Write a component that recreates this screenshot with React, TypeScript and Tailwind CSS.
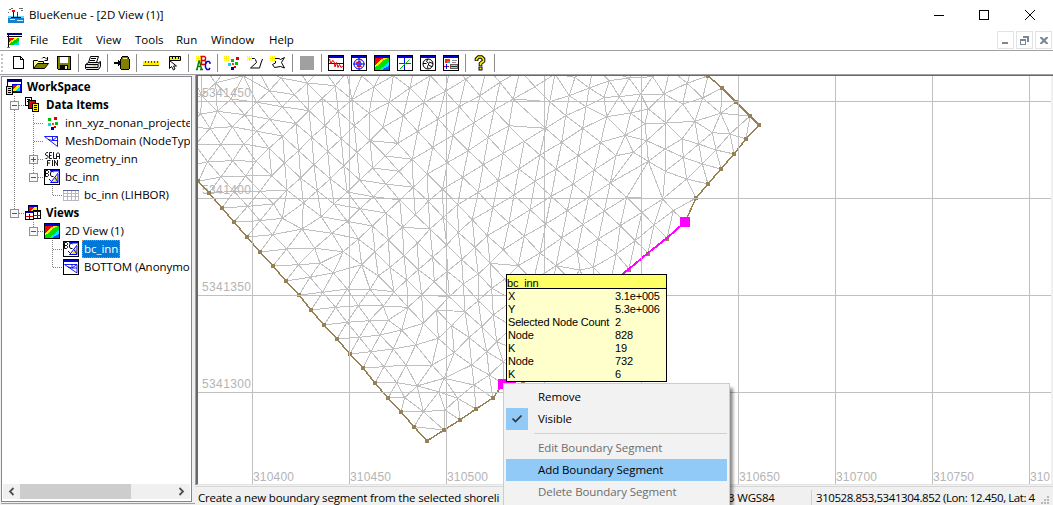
import React from "react";

type P = [number, number];

/* ---------- mesh geometry ---------- */

const patch = (ox: number, oy: number, flat: number[]): P[] => {
  const out: P[] = [];
  for (let i = 0; i < flat.length; i += 2) out.push([ox + flat[i] / 3, oy + flat[i + 1] / 3]);
  return out;
};

const westShore = [
  ...patch(195, 74, [-70, 235, -30, 280, 10, 322, 42, 357, 81, 402, 117, 444, 156, 489, 195, 534, 234, 576]),
  ...patch(300, 260, [-42, 64, -3, 105, 33, 150, 72, 195, 111, 237, 150, 282, 189, 324, 225, 369, 264, 414, 303, 456, 342, 500, 381, 543]),
];
westShore[9] = [286, 281];
const southShore = patch(300, 260, [432, 510, 480, 480, 528, 447, 579, 414, 609, 372]);
const selected: P[] = [[503, 384], [523, 380], [540, 357], [555, 331], [573, 316], [592, 300], [610, 284], [629, 269], [648, 253], [667, 238], [685, 222]];
const eastShore = patch(480, 74, [615, 444, 648, 372, 684, 330, 723, 285, 762, 240, 798, 195, 837, 153, 810, 126, 768, 84, 726, 42, 684, 5, 640, -40]);

const outline: P[] = [...westShore, ...southShore, ...selected.slice(1, -1), ...eastShore, [680, 30], [170, 30]];

const interior: P[] = [
  ...patch(195, 74, [
    -20, -20, 62, 27, 20, -30, 100, -25, 145, 5, 180, -30, 258, 12, 300, -30, 337, 27, 380, -20, 223, 50, 298, 62, 20, 65, 108, 75, 185, 85, 262, 98, 342, 110,
    -50, 20, -50, 80, -60, 150, 17, 120, 67, 112, 149, 122, 225, 136, 303, 149, 382, 73, 421, 35, 471, 77, 430, 112, -25, 160, 45, 163, 112, 158,
    185, 172, 263, 186, 350, 190, 390, 155, 439, 194, 478, 155, 522, 117, 455, -5, 500, 5, 537, 38, 575, -35, 564, 160, 0, 213, 78, 211, 146, 210,
    222, 223, 311, 230, 398, 232, 486, 235, 525, 200, 608, 208, 583, 85, 595, 5, 625, 125, 645, 42, 660, -35, 38, 263, 113, 260, 183, 262, 269, 267,
    357, 272, 446, 275, 533, 282, 571, 246, 652, 256, 668, 172, 688, 85, 706, 5, 78, 309, 152, 306, 230, 305, 317, 312, 406, 314,
    494, 318, 612, 292, 697, 300, 713, 220, 730, 135, 751, 52, 768, -30, 117, 352, 195, 352, 276, 348, 367, 350, 457, 354, 573, 330,
    655, 340, 757, 266, 774, 184, 793, 98, 812, 15, 158, 397, 236, 390, 325, 387, 417, 390, 535, 368, 614, 378, 700, 382,
    743, 345, 820, 230, 836, 147, 855, 65, 195, 440, 262, 433, 379, 428, 495, 404, 573, 417, 661, 423, 788, 392, 803, 310,
    850, 355, 233, 482, 321, 465, 411, 478, 457, 442, 532, 456, 622, 460, 745, 430, 705, 465, 832, 437, 275, 525, 359, 523,
    445, 533, 490, 495, 580, 498, 668, 507, 790, 475, 755, 513, 840, 520, 310, 572, 375, 568, 500, 572, 540, 533, 627, 545,
    713, 550, 800, 557, 585, 580, 670, 587, 757, 592, 850, 600,
  ]),
  ...patch(480, 74, [
    20, -20, 60, 25, 120, -10, 42, 108, 100, 75, 165, 38, 225, 0, 87, 155, 25, 190, 10, 272, 70, 238, 133, 202, 197, 163, 257, 125, 318, 98, 209, 83,
    268, 65, 328, 42, 388, 20, 285, 10, 340, -25, 372, 70, 418, 68, 447, 12, 480, -30, 380, 128, 452, 117, 482, 60, 505, 105, 518, 8, 570, -15, 552, 60,
    495, 150, 558, 147, 608, 90, 622, 28, 668, 72, 645, 142, 722, 118, 697, 176, 750, 180, 708, 228, 656, 210, 606, 195,
    555, 225, 500, 200, 436, 184, 362, 205, 308, 163, 245, 205, 180, 243, 117, 285, 55, 320, 408, 245, 460, 235, 505, 262,
    343, 288, 295, 245, 229, 285, 165, 322, 102, 363, 38, 402, 280, 330, 391, 327, 440, 370, 556, 292, 610, 250, 667, 270,
    620, 315, 548, 375, 580, 410, 326, 370, 214, 367, 150, 407, 87, 447, 22, 485, 373, 411, 486, 415, 522, 453, 466, 500,
    409, 540, 421, 455, 308, 452, 355, 495, 262, 410, 197, 450, 133, 487, 70, 527, 245, 492, 180, 537, 292, 533, 115, 575,
    30, 568, 228, 575, 340, 580, 390, 600, 160, 620, 275, 620, 75, 615,
  ]),
  ...patch(300, 260, [
    58, 10, 30, 52, 100, 38, 183, 13, 235, 48, 282, 95, 68, 97, 142, 87, 210, 88, 107, 142, 175, 137, 250, 138, 324, 142,
    276, 5, 320, 60, 141, 187, 208, 182, 265, 180, 370, 190, 365, 105, 178, 232, 240, 225, 305, 210, 415, 235, 213, 275,
    280, 267, 347, 255, 252, 320, 318, 315, 396, 315, 463, 278, 410, 150, 455, 197, 290, 368, 351, 378, 432, 355, 515, 315,
    507, 232, 314, 413, 416, 395, 473, 415, 370, 455, 435, 450, 403, 65, 361, 20, 448, 110, 490, 72, 445, 28, 532, 35, 535, 122,
    580, 165, 495, 155, 545, 200, 590, 245, 575, 85, 615, 45, 560, 275, 610, 305, 522, 375, 568, 345, 640, 120, 640, 200, 650, 270,
    660, 330, 690, 80, 700, 160, 710, 240, 740, 30, 750, 120, 760, 200, 790, 70, 800, 150, 840, 30, 850, 110, 900, 60,
  ]),
];

const inside = (x: number, y: number, poly: P[]) => {
  let hit = false;
  for (let i = 0, j = poly.length - 1; i < poly.length; j = i++) {
    const [xi, yi] = poly[i];
    const [xj, yj] = poly[j];
    if (yi > y !== yj > y && x < ((xj - xi) * (y - yi)) / (yj - yi) + xi) hit = !hit;
  }
  return hit;
};

interface Tri { v: [number, number, number]; cx: number; cy: number; r: number }

const makeTri = (pts: P[], a: number, b: number, c: number): Tri => {
  const [ax, ay] = pts[a];
  const [bx, by] = pts[b];
  const [qx, qy] = pts[c];
  const d = 2 * (ax * (by - qy) + bx * (qy - ay) + qx * (ay - by)) || 1e-9;
  const a2 = ax * ax + ay * ay, b2 = bx * bx + by * by, c2 = qx * qx + qy * qy;
  const cx = (a2 * (by - qy) + b2 * (qy - ay) + c2 * (ay - by)) / d;
  const cy = (a2 * (qx - bx) + b2 * (ax - qx) + c2 * (bx - ax)) / d;
  return { v: [a, b, c], cx, cy, r: (ax - cx) ** 2 + (ay - cy) ** 2 };
};

const buildMesh = (): string => {
  const kept: P[] = [...outline];
  for (const p of interior) {
    if (inside(p[0], p[1], outline) && kept.every((q) => Math.hypot(p[0] - q[0], p[1] - q[1]) > 11.5)) kept.push(p);
  }
  const n = kept.length;
  const pts: P[] = [...kept, [-5000, -4000], [6000, -4100], [500, 7000]];
  let tris: Tri[] = [makeTri(pts, n, n + 1, n + 2)];
  for (let i = 0; i < n; i++) {
    const [x, y] = pts[i];
    const edges = new Map<string, [number, number]>();
    const rest: Tri[] = [];
    for (const t of tris) {
      if ((x - t.cx) ** 2 + (y - t.cy) ** 2 < t.r) {
        for (let k = 0; k < 3; k++) {
          const a = t.v[k], b = t.v[(k + 1) % 3];
          const key = a < b ? `${a}-${b}` : `${b}-${a}`;
          if (edges.has(key)) edges.delete(key);
          else edges.set(key, [a, b]);
        }
      } else rest.push(t);
    }
    edges.forEach(([a, b]) => rest.push(makeTri(pts, a, b, i)));
    tris = rest;
  }
  const seen = new Set<string>();
  let d = "";
  for (const t of tris) {
    if (t.v.some((k) => k >= n)) continue;
    const gx = (pts[t.v[0]][0] + pts[t.v[1]][0] + pts[t.v[2]][0]) / 3;
    const gy = (pts[t.v[0]][1] + pts[t.v[1]][1] + pts[t.v[2]][1]) / 3;
    if (!inside(gx, gy, outline)) continue;
    for (let k = 0; k < 3; k++) {
      const a = t.v[k], b = t.v[(k + 1) % 3];
      const key = a < b ? `${a}-${b}` : `${b}-${a}`;
      if (seen.has(key)) continue;
      seen.add(key);
      d += `M${pts[a][0].toFixed(1)} ${pts[a][1].toFixed(1)}L${pts[b][0].toFixed(1)} ${pts[b][1].toFixed(1)}`;
    }
  }
  return d;
};

const meshPath = buildMesh();
const line = (pts: P[]) => pts.map((p) => p.join(",")).join(" ");
const gridX = [252, 349, 446, 544, 641, 738, 835, 932, 1029];
const gridY = [101, 198, 295, 392];
const labelsX: [number, string][] = [[253, "310400"], [350, "310450"], [447, "310500"], [739, "310650"], [836, "310700"], [933, "310750"]];

function MeshView() {
  return (
    <svg viewBox="198 76 853 408" width="853" height="408" className="block shrink-0 bg-white" shapeRendering="crispEdges">
      <path d={meshPath} stroke="#c0c0c0" fill="none" />
      <g fontFamily="Liberation Sans, sans-serif" fontSize="12" fill="#b4b4b4">
        {labelsX.map(([x, t]) => (
          <text key={x} x={x} y="480.5" textLength="41">{t}</text>
        ))}
        <text x="1030" y="480.5" textLength="20">310</text>
        {gridY.map((y, i) => (
          <text key={y} x="202" y={y - 4} textLength="49">{5341450 - i * 50}</text>
        ))}
      </g>
      {[[...westShore, ...southShore], eastShore].map((s, i) => (
        <g key={i}>
          <polyline points={line(s)} fill="none" stroke="#968254" strokeWidth="1.5" />
          {s.map(([x, y], k) => (
            <rect key={k} x={Math.round(x) - 2} y={Math.round(y) - 2} width="4" height="4" fill="#968254" />
          ))}
        </g>
      ))}
      {selected.map(([x, y], k) => (
        <rect key={k} x={x - 2} y={y - 1} width="4" height="4" fill="#968254" />
      ))}
      <polyline points={line(selected)} fill="none" stroke="#ff00ff" strokeWidth="2" />
      <g fill="#c0c0c0">
        {gridX.map((x) => <rect key={x} x={x} y="76" width="1" height="408" />)}
        {gridY.map((y) => <rect key={y} x="198" y={y} width="853" height="1" />)}
      </g>
      <rect x="680" y="217" width="10" height="10" fill="#ff00ff" />
      <rect x="498" y="379" width="10" height="10" fill="#ff00ff" />
    </svg>
  );
}

/* ---------- icons ---------- */

function Ico({ children, smooth = false }: { children: React.ReactNode; smooth?: boolean }) {
  return (
    <svg width="16" height="16" viewBox="0 0 16 16" className="block shrink-0" shapeRendering={smooth ? "auto" : "crispEdges"} fill="none">
      {children}
    </svg>
  );
}

const Star = ({ x = 0, y = 0 }: { x?: number; y?: number }) => (
  <path d={`M${x + 2.5} ${y}v2M${x + 2.5} ${y + 3}v2M${x} ${y + 2.5}h5M${x + 0.5} ${y}v1M${x + 4.5} ${y}v1M${x + 0.5} ${y + 4}v1M${x + 4.5} ${y + 4}v1`} stroke="#ffee00" />
);
const Frame = ({ children }: { children?: React.ReactNode }) => (
  <>
    <rect x="0.5" y="0.5" width="15" height="15" fill="#fff" stroke="#000" shapeRendering="crispEdges" />
    <path d="M1 1h14v2H1z" fill="#0000d0" shapeRendering="crispEdges" />
    {children}
  </>
);
const Rainbow = () => (
  <>
    <path d="M1 3h14v12H1z" fill="#00e000" />
    <path d="M1 3h13L8 6 5 10 1 12z" fill="#ffee00" />
    <path d="M1 3h9L6 5 4 8 1 10z" fill="#ff0000" />
    <path d="M15 6v9H5l3-3 3-1 2-3z" fill="#00e5ff" />
    <path d="M15 11v4H8l3-2z" fill="#0050ff" />
  </>
);

const NewIcon = () => <Ico><path d="M3.500 1.500h7l3 3v9h-10zM10.500 1.500v3h3" fill="#fff" stroke="#000" /></Ico>;
const OpenIcon = () => (
  <Ico smooth>
    <path d="M0.5 13.500v-8h4l1 1h5v3" fill="#ffff80" stroke="#000" />
    <path d="M0.5 13.500l4-5h11l-4 5z" fill="#808000" stroke="#000" />
    <path d="M9 3.500l1-1h2l2 2M14.500 2v3.500h-3" stroke="#000" />
  </Ico>
);
const SaveIcon = () => (
  <Ico>
    <path d="M1.500 1.500h13v13h-12l-1-1z" fill="#808000" stroke="#000" />
    <path d="M4 2h8v6H4z" fill="#fff" />
    <path d="M4 10h8v4H4z" fill="#000" />
    <path d="M9 11h2v3H9z" fill="#e8e8e8" />
  </Ico>
);
const PrintIcon = () => (
  <Ico smooth>
    <path d="M5.500 1.500h8l-2 6h-8z" fill="#fff" stroke="#000" />
    <path d="M6 3.500h5M5 5.500h5" stroke="#000" />
    <path d="M3.500 7.500h10l2 -1v5l-2 3h-12l-1-1v-4z" fill="#e0e0e0" stroke="#000" />
    <path d="M1 9.500h12l2-2M1 12.500h12v-3" stroke="#000" />
    <path d="M8 10.500h3v1H8z" fill="#d0c000" />
  </Ico>
);
const ImportIcon = () => (
  <Ico>
    <path d="M6.500 4.500l2-3h5l2 3v9l-1 1h-7l-1-1z" fill="#808000" stroke="#000" />
    <path d="M9 3h4v1H9z" fill="#ffff80" />
    <path d="M0 7h4V5l4 3-4 3V9H0z" fill="#000" />
  </Ico>
);
const RulerIcon = () => (
  <Ico>
    <path d="M0 6h16v4H0z" fill="#ffee00" />
    <path d="M0 10.500h16" stroke="#605000" />
    <path d="M2.500 6v2M5.500 6v2M8.500 6v2M11.500 6v2M14.500 6v2" stroke="#605000" />
  </Ico>
);
const ProbeIcon = () => (
  <Ico smooth>
    <path d="M3.500 1.500h11v4h-11z" fill="#ffee00" stroke="#000" />
    <path d="M6.500 2v2M9.500 2v2M12.500 2v2" stroke="#000" />
    <path d="M3.500 5.500v8l2-2 2 3.500 1.500-1-1.500-3h3z" fill="#fff" stroke="#000" />
  </Ico>
);
const AbcIcon = () => (
  <Ico smooth>
    <Star x={1} y={1} />
    <path d="M1 14.500h2M2 14l2-8h.5l2 8M5 14.500h3M2.500 11.500h4" stroke="#008000" strokeWidth="1.400" />
    <path d="M6.500 1.500v8M5.500 1.500h4l1 1v2l-1 1H7M9.500 5.500l1.500 1v2l-1 1H5.500" stroke="#e00000" strokeWidth="1.400" />
    <path d="M15 9V7.500l-1-1h-2l-1.500 2v4l1.500 2h2l1-1.500" stroke="#0000e0" strokeWidth="1.400" />
  </Ico>
);
const Dots = ({ star = true }: { star?: boolean }) => (
  <>
    {star && <Star x={0} y={1} />}
    <path d={star ? "M7 4h3v3H7z" : "M4 3h3v3H4z"} fill="#00c000" />
    <path d={star ? "M12 2h3v3h-3z" : "M10 2h3v3h-3z"} fill="#e00000" />
    <path d="M11 7h3v3h-3z" fill="#00c000" />
    <path d="M10 11h2v2h-2z" fill="#e00000" />
    <path d="M8 8h2v2H8z" fill="#e05000" />
    <path d="M4 8h3v3H4z" fill="#00d8e8" />
    <path d="M7 12h3v3H7z" fill="#0000c0" />
  </>
);
const LineIcon = () => <Ico smooth><Star y={1} /><path d="M5 3.500h2.500l1 1 1 3-6 5.500h9l1.500-5 1.500-4" stroke="#000" /></Ico>;
const PolyIcon = () => <Ico smooth><Star y={1} /><path d="M5 3.500h4l1.500 1 4-2-3 5 3 5.500-4-1.500-6 1-2-3 3-1.500V6" stroke="#000" /></Ico>;
const PlotIcon = () => <Ico smooth><Frame><path d="M1 8.500h14" stroke="#00f" /><path d="M1.500 4l1.500 5 1.500-3.500 1.500 1L7 12l1.500-4.500 1.500 5 1.500-3 1.500 3 2-1.500" stroke="#e00000" /></Frame></Ico>;
const PolarIcon = () => (
  <Ico smooth><Frame><circle cx="8" cy="9" r="5" stroke="#00f" /><circle cx="8" cy="9" r="2.200" stroke="#00f" /><path d="M8 3v12M2 9h12" stroke="#00f" /><path d="M4.500 7l3 .5 3-2M5.500 12l3-1 2.500 1" stroke="#e00000" /></Frame></Ico>
);
const View2DIcon = () => <Ico><Frame><Rainbow /></Frame></Ico>;
const View3DIcon = () => <Ico smooth><Frame><path d="M7.500 3v12" stroke="#00f" /><path d="M2 8.500h12" stroke="#e00000" /><path d="M3 14L12.500 4.500" stroke="#00c000" /></Frame></Ico>;
const GlobeIcon = () => <Ico smooth><Frame><circle cx="8" cy="9" r="5" stroke="#000" /><path d="M8 4L6.500 6.500l2.500 2-1.500 3 .5 2M3 8.500h3.500M9 7l4 1.500M9 10.500l3 1" stroke="#000" /></Frame></Ico>;
const ReportIcon = () => (
  <Ico><Frame>
    <path d="M2 4h5v4H2z" fill="#ff3000" /><path d="M4 6h3v2H4z" fill="#00c0c0" /><path d="M9 5.500h5M9 7.500h4" stroke="#909090" />
    <path d="M1 11.500h5" stroke="#e00000" /><path d="M3.500 9v5" stroke="#00f" /><path d="M7.500 9.500h7v4h-7z" fill="#c0c0c0" stroke="#606060" /><path d="M8 11.500h6" stroke="#303030" />
  </Frame></Ico>
);
const HelpIcon = () => (
  <Ico smooth>
    <path d="M4.500 6V4l2-2h3l2 2v2L8.500 8.500V11" stroke="#000" strokeWidth="3.600" />
    <path d="M4.500 5.500V4l2-2h3l2 2v2L8.500 8.500v2" stroke="#ffee00" strokeWidth="1.700" />
    <path d="M6.500 11.500h4v4h-4z" fill="#000" /><path d="M7.500 12.500h2v2h-2z" fill="#ffee00" />
  </Ico>
);

const Notes = ({ x, y }: { x: number; y: number }) => (
  <>
    <rect x={x + 0.5} y={y + 0.5} width="6" height="8" fill="#ffee00" stroke="#000" />
    <path d={`M${x + 2} ${y + 2.5}h3M${x + 2} ${y + 4.5}h3M${x + 2} ${y + 6.5}h3`} stroke="#000" />
  </>
);
const WorkspaceIcon = () => (
  <Ico>
    <path d="M1.500.5h14v13h-14z" fill="#fff" stroke="#000" /><path d="M2 2h13" stroke="#000080" strokeWidth="2" />
    <path d="M6.500 5.500h8v7h-8z" fill="#ffee00" stroke="#00f" /><path d="M7 6h5l-5 4z" fill="#f00" /><path d="M14 8v4h-5z" fill="#00d8e8" />
    <Notes x={0} y={7} />
  </Ico>
);
const DataIcon = () => (
  <Ico>
    <path d="M.5.5h6v8h-6z" fill="#fff" stroke="#000" /><path d="M2 2.500h3M2 4.500h2" stroke="#000" />
    <path d="M3.500 3.500h7v8h-7z" fill="#e00000" stroke="#000" />
    <Notes x={7} y={6} />
  </Ico>
);
const MeshIcon = () => <Ico smooth><path d="M.5 3.500h13v10zM8.500 3.500V7.500M4 6.500l4.500 1h5M8.500 7.500l5-4" stroke="#0000ff" strokeWidth="0.900" /></Ico>;
const SelafinIcon = () => (
  <Ico smooth>
    <path d="M4 1.500H2.500L1.500 3v1L4 5v1.500l-1 1H1.500M8 1.500H5.500v6H8M5.500 4.500h2M9.500 1v6.500H12M12.500 8V3L14 1.500 15.500 3v5M12.500 5.500h3" stroke="#000" strokeWidth="0.900" />
    <path d="M6.500 9.500h-3V15M3.500 12h2.500M8.500 9v6M10.500 15V9M10.500 9.500l3 5M13.500 15V9" stroke="#000" strokeWidth="0.900" />
  </Ico>
);
const BcIcon = () => (
  <Ico smooth>
    <rect x="0.500" y="0.500" width="15" height="15" fill="#fff" stroke="#000" />
    <path d="M6 1h9v1.500H6z" fill="#0000d0" />
    <path d="M14 6v8H7.500z" fill="#ffe000" />
    <path d="M14.500 3.500L8 12l-1.500 1.500H14V5M5 10l3 3M11 8.500l3 5" stroke="#0000ff" />
    <path d="M1.500 1.500v6h2l1-1V5.500l-1-1h-2M3.500 4.500l1-1v-1l-1-1h-2M9.500 3l-1-.5h-1L6.500 4v2l1 1.500h2" stroke="#000" />
  </Ico>
);
const TableIcon = () => (
  <Ico><path d="M.5 3.500h15v10H.5zM4.500 3v10M8.500 3v10M12.500 3v10M0 6.500h16M0 9.500h16" stroke="#b8b8c0" /><path d="M0 3h16v1H0z" fill="#6060a0" /></Ico>
);
const ViewsIcon = () => (
  <Ico>
    <path d="M3.500.5h9v9h-9z" fill="#ffee00" stroke="#000" /><path d="M4 2h6l-6 5z" fill="#f00" /><path d="M12 4v5H8z" fill="#00d8e8" /><path d="M4 1.500h8" stroke="#00c" />
    <path d="M.5 6.500h8v8h-8z" fill="#fff" stroke="#000" /><path d="M1 7.500h7" stroke="#00c" /><path d="M1 11.500h7" stroke="#e00000" /><path d="M4.500 9v5" stroke="#00c" />
    <path d="M8.500 5.500h7v8h-7z" fill="#fff" stroke="#000" /><path d="M9 6.500h6M12.500 7v6" stroke="#00c" /><path d="M9 10.500h6" stroke="#e00000" />
  </Ico>
);
const BottomIcon = () => <Ico smooth><Frame><path d="M1.500 5.500h12.500v8.500zM9 5.500V9M5 8l4 1h5M9 9l5-3.500" stroke="#0000ff" strokeWidth="0.900" /></Frame></Ico>;
const AppIcon = () => (
  <Ico>
    <path d="M0 9h16v7H0z" fill="#1b7fd0" /><path d="M0 9h16v2H0z" fill="#60d8f8" />
    <path d="M2 12.500h5M9 13.500h6" stroke="#c8f0ff" /><path d="M1 2.500h2M3 1.500h2M11 1.500h4M13 3.500h2M0 5.500h1" stroke="#666" />
    <path d="M5.500 4v6" stroke="#101060" /><path d="M9.500 5v5" stroke="#303080" /><path d="M4 3h3v2H4z" fill="#e01010" /><path d="M3 10.500h10" stroke="#000060" />
  </Ico>
);
const ChildIcon = () => (
  <Ico>
    <path d="M1 1h15v2H1z" fill="#000080" /><path d="M2.500 3v12M1 4.500h15" stroke="#000" /><path d="M1 15.500h3" stroke="#777" />
    <path d="M3 6h10v7H3z" fill="#00d000" /><path d="M3 6h9l-9 6z" fill="#ffee00" /><path d="M3 6h6l-6 4z" fill="#f00" /><path d="M13 9v4H7z" fill="#00d8ff" />
  </Ico>
);

/* ---------- chrome ---------- */

const tools: (React.ReactNode | "|")[] = [
  <NewIcon />, <OpenIcon />, <SaveIcon />, "|", <PrintIcon />, "|", <ImportIcon />, "|", <RulerIcon />, <ProbeIcon />, "|", <AbcIcon />, "|",
  <Ico><Dots /></Ico>, <LineIcon />, <PolyIcon />, "|", <Ico><path d="M1 1h14v14H1z" fill="#a0a0a0" /></Ico>, "|",
  <PlotIcon />, <PolarIcon />, <View2DIcon />, <View3DIcon />, <GlobeIcon />, <ReportIcon />, "|", <HelpIcon />, "|",
];

const menus: [string, string][] = [
  ["File", "w-[32px]"], ["Edit", "w-[34px]"], ["View", "w-[39px]"], ["Tools", "w-[41px]"], ["Run", "w-[35px]"], ["Window", "w-[58px]"], ["Help", "w-[40px]"],
];

type Guide = "v" | "t" | "l" | "+" | "-" | "-l" | " ";

function GuideCell({ kind }: { kind: Guide }) {
  const box = kind === "+" || kind === "-" || kind === "-l";
  return (
    <svg width="19" height="18" viewBox="0 0 19 18" className="block shrink-0" shapeRendering="crispEdges" fill="none">
      {kind !== " " && <path d={kind === "l" || kind === "-l" ? "M9.500 0V9" : "M9.500 0V18"} stroke="#808080" strokeDasharray="1 1" />}
      {kind !== "v" && kind !== " " && <path d="M10 9.500H19" stroke="#808080" strokeDasharray="1 1" />}
      {box && <rect x="5.500" y="5.500" width="8" height="8" fill="#f8f8f8" stroke="#919191" />}
      {box && <path d="M7 9.500h5" stroke="#3b5998" />}
      {kind === "+" && <path d="M9.500 7v5" stroke="#3b5998" />}
    </svg>
  );
}

const rows: { g: Guide[]; icon: React.ReactNode; label: string; bold?: boolean; sel?: boolean }[] = [
  { g: [], icon: <WorkspaceIcon />, label: "WorkSpace", bold: true },
  { g: ["-"], icon: <DataIcon />, label: "Data Items", bold: true },
  { g: ["v", "t"], icon: <Ico><Dots star={false} /></Ico>, label: "inn_xyz_nonan_projecte" },
  { g: ["v", "t"], icon: <MeshIcon />, label: "MeshDomain (NodeTyp" },
  { g: ["v", "+"], icon: <SelafinIcon />, label: "geometry_inn" },
  { g: ["v", "-l"], icon: <BcIcon />, label: "bc_inn" },
  { g: ["v", " ", "l"], icon: <TableIcon />, label: "bc_inn (LIHBOR)" },
  { g: ["-l"], icon: <ViewsIcon />, label: "Views", bold: true },
  { g: [" ", "-l"], icon: <View2DIcon />, label: "2D View (1)" },
  { g: [" ", " ", "t"], icon: <BcIcon />, label: "bc_inn", sel: true },
  { g: [" ", " ", "l"], icon: <BottomIcon />, label: "BOTTOM (Anonymo" },
];

function Tree() {
  return (
    <div className="mr-px flex flex-1 flex-col overflow-hidden pt-px">
      {rows.map((r, i) => (
        <div key={i} className="flex h-[18px] shrink-0 items-center pl-[3px]">
          {r.g.map((k, j) => <GuideCell key={j} kind={k} />)}
          <span className="ml-px mr-[3px]">{r.icon}</span>
          <span
            className={
              "h-[18px] whitespace-nowrap pl-[2px] leading-[17px] tracking-[-0.04px] " +
              (r.bold ? "font-bold " : "") +
              (r.sel ? "bg-[#0078d7] pr-[2px] text-white outline-1 -outline-offset-1 outline-dotted outline-[#e08030]" : "")
            }
          >
            {r.label}
          </span>
        </div>
      ))}
    </div>
  );
}

const info: [string, string][] = [
  ["X", "3.1e+005"], ["Y", "5.3e+006"], ["Selected Node Count", "2"], ["Node", "828"], ["K", "19"], ["Node", "732"], ["K", "6"],
];

function InfoTip() {
  return (
    <div className="absolute left-[506px] top-[274px] h-[108px] w-[161px] border border-black bg-[#ffffcc] font-['Liberation_Sans',sans-serif] text-[11px] tracking-[-0.18px]">
      <div className="h-[14px] border-b border-black bg-[#ffff66] leading-[16px]">bc_inn</div>
      {info.map(([k, v], i) => (
        <div key={i} className="flex h-[13px] pl-px leading-[14px]">
          <span className="w-[107px] whitespace-nowrap">{k}</span>
          <span>{v}</span>
        </div>
      ))}
    </div>
  );
}

const menuItem = "flex h-[22px] items-center whitespace-nowrap pl-[32px]";

function ContextMenu() {
  return (
    <div className="absolute left-[503px] top-[383px] h-[140px] w-[227px] border border-[#ccc] bg-[#f2f2f2] p-[2px] tracking-[-0.08px] shadow-[4px_4px_3px_-1px_rgba(0,0,0,0.45)]">
      <div className={menuItem}>Remove</div>
      <div className="flex h-[22px] items-center">
        <span className="flex h-[22px] w-[22px] items-center justify-center bg-[#91c9f7]">
          <svg width="12" height="10" viewBox="0 0 12 10" fill="none"><path d="M1.500 4.500l3 3 6-6" stroke="#333" strokeWidth="1.700" /></svg>
        </span>
        <span className="pl-[10px]">Visible</span>
      </div>
      <div className="my-[3px] ml-[28px] h-px bg-[#d2d2d2]" />
      <div className={menuItem + " text-[#6d6d6d]"}>Edit Boundary Segment</div>
      <div className={menuItem + " bg-[#91c9f7]"}>Add Boundary Segment</div>
      <div className={menuItem + " text-[#6d6d6d]"}>Delete Boundary Segment</div>
    </div>
  );
}

export default function App() {
  return (
    <div className="relative flex h-[505px] w-[1053px] flex-col overflow-hidden bg-white font-['Open_Sans','Noto_Sans',sans-serif] text-[11.5px] text-black">
      <header className="flex h-[29px] shrink-0 items-center pl-[8px]">
        <AppIcon />
        <span className="ml-[5px] flex-1">BlueKenue - [2D View (1)]</span>
        <svg width="119" height="12" viewBox="0 0 119 12" fill="none" stroke="#000" shapeRendering="crispEdges">
          <path d="M0 6.500h10M45.500 1.500h9v9h-9z" />
          <path d="M91 1l10 10M101 1L91 11" shapeRendering="auto" />
        </svg>
      </header>
      <nav className="flex h-[21px] shrink-0 items-center pl-[6px]">
        <ChildIcon />
        <div className="ml-[8px] flex flex-1">
          {menus.map(([m, w]) => <span key={m} className={w + " whitespace-nowrap"}>{m}</span>)}
        </div>
        <div className="mr-px mt-[1px] flex gap-[2px]">
          {["M4 10h6v2H4z", "M6 4h6v6h-2V6H6zM3 7h6v6H3zM4 9h4v3H4z", "M4 5h2l2 2 2-2h2v1L9.500 8.500 12 11v1h-2L8 10l-2 2H4v-1L6.500 8.500 4 6z"].map((d, i) => (
            <span key={i} className="flex h-[18px] w-[17px] items-center justify-center border border-[#e3e3e3] bg-white">
              <svg width="15" height="16" viewBox="0 0 15 16"><path d={d} fill="#7a8794" fillRule="evenodd" /></svg>
            </span>
          ))}
        </div>
      </nav>
      <div className="flex h-[24px] shrink-0 items-center border-t border-[#a0a0a0] pl-[1px]">
        <span className="mr-[2px] flex h-[18px] w-[3px] flex-col justify-between">
          {[0, 1, 2, 3, 4].map((k) => <i key={k} className="block h-[2px] w-[2px] bg-[#c4c4c4]" />)}
        </span>
        {tools.map((t, i) =>
          t === "|" ? (
            <span key={i} className="flex w-[6px] justify-center"><i className="block h-[18px] w-px bg-[#8c8c8c]" /></span>
          ) : (
            <span key={i} className="flex w-[23px] justify-center pl-px">{t}</span>
          ),
        )}
      </div>
      <div className="flex min-h-0 flex-1">
        <aside className="flex w-[195px] shrink-0 flex-col border-t border-[#a0a0a0] bg-[#f0f0f0] pl-px pt-px">
          <div className="flex h-[426px] w-[191px] flex-col border border-[#828790] bg-white">
            <Tree />
            <div className="mx-px mb-[2px] flex h-[15px] items-center bg-[#f0f0f0]">
              <svg width="17" height="15" viewBox="0 0 17 15" fill="none" stroke="#505050" strokeWidth="1.800"><path d="M10.500 4L7 7.500l3.500 3.500" /></svg>
              <span className="h-full w-[111px] bg-[#cdcdcd]" />
              <span className="flex-1" />
              <svg width="17" height="15" viewBox="0 0 17 15" fill="none" stroke="#505050" strokeWidth="1.800"><path d="M6.500 4L10 7.500 6.500 11" /></svg>
            </div>
          </div>
          <div className="mt-px h-px bg-[#a0a0a0]" />
        </aside>
        <main className="flex min-w-0 flex-1 flex-col bg-[#f0f0f0]">
          <div className="flex h-[411px] shrink-0 border-l border-t border-[#a0a0a0]">
            <div className="flex-1 overflow-hidden border-b border-l-2 border-t border-b-[#e3e3e3] border-l-[#696969] border-t-[#696969]">
              <MeshView />
            </div>
          </div>
          <footer className="mt-px flex flex-1 items-center border-t border-[#d7d7d7] pl-[3px] pt-[2px] tracking-[-0.18px]">
            <span className="w-[530px] whitespace-nowrap">Create a new boundary segment from the selected shoreli</span>
            <span className="w-[83px] whitespace-nowrap">3 WGS84</span>
            <i className="block h-[16px] w-px bg-[#d0d0d0]" />
            <span className="ml-[4px] w-[221px] whitespace-nowrap tracking-[-0.43px]">310528.853,5341304.852 (Lon: 12.450, Lat: 4</span>
            <svg width="9" height="9" viewBox="0 0 9 9" fill="#b8b8b8" className="ml-[4px] mt-[5px] shrink-0"><path d="M6 0h2v2H6zM3 3h2v2H3zM6 3h2v2H6zM0 6h2v2H0zM3 6h2v2H3zM6 6h2v2H6z" /></svg>
          </footer>
        </main>
      </div>
      <InfoTip />
      <ContextMenu />
    </div>
  );
}
